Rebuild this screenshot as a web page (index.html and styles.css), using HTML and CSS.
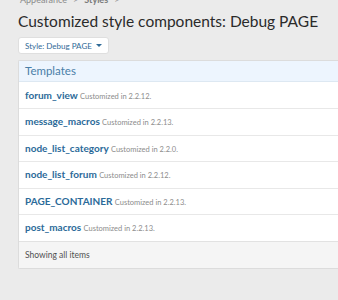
FILE: index.html
```html
<!DOCTYPE html>
<html>
<head>
<meta charset="utf-8">
<link rel="stylesheet" href="styles.css">
</head>
<body>
<div class="page">
  <div class="crumbs"><span>Appearance</span><span class="sep">&gt;</span><span class="strong">Styles</span><span class="sep">&gt;</span></div>
  <h1 class="title">Customized style components: Debug PAGE</h1>
  <div class="btnrow"><span class="btn">Style: Debug PAGE <span class="caret"></span></span></div>
  <div class="block">
    <div class="block-head">Templates</div>
    <div class="row"><a class="name">forum_view</a> <span class="hint">Customized in 2.2.12.</span></div>
    <div class="row"><a class="name">message_macros</a> <span class="hint">Customized in 2.2.13.</span></div>
    <div class="row"><a class="name">node_list_category</a> <span class="hint">Customized in 2.2.0.</span></div>
    <div class="row"><a class="name">node_list_forum</a> <span class="hint">Customized in 2.2.12.</span></div>
    <div class="row"><a class="name">PAGE_CONTAINER</a> <span class="hint">Customized in 2.2.13.</span></div>
    <div class="row"><a class="name">post_macros</a> <span class="hint">Customized in 2.2.13.</span></div>
    <div class="block-foot">Showing all items</div>
  </div>
</div>
</body>
</html>
```
FILE: styles.css
```css
html, body { margin: 0; padding: 0; background: #ebebeb; }
body { font-family: Lato, "Noto Sans", sans-serif; color: #141414; overflow: hidden; width: 338px; height: 300px; }
.page { padding: 0 0 0 18px; }
.crumbs { font-size: 9px; color: #8a8a8a; height: 10px; line-height: 10px; margin-top: -5px; display: flex; gap: 6px; padding-left: 2px; }
.crumbs .strong { font-weight: 700; color: #7a7a7a; }
.title { font-weight: 400; font-size: 15.5px; line-height: 22px; margin: 5px 0 0 0; color: #2a2a2a; white-space: nowrap; }
.btnrow { margin-top: 5px; display: flex; }
.btn { display: inline-flex; align-items: center; gap: 3px; background: #fff; border: 1px solid #dfdfdf; border-radius: 3px; height: 15px; padding: 0 6px 0 6px; font-size: 8px; color: #2f6a97; }
.caret { width: 0; height: 0; border-left: 3px solid transparent; border-right: 3px solid transparent; border-top: 3px solid #2f6a97; margin-left: 1px; }
.block { margin-top: 6px; background: #fff; border: 1px solid #dcdcdc; border-right: none; border-radius: 2px 0 0 2px; }
.block-head { background: #edf5fe; color: #4a7fa8; font-size: 11.5px; height: 20px; line-height: 20px; padding-left: 6px; border-bottom: 1px solid #dde8f2; }
.row { height: 25.5px; line-height: 25.5px; padding-left: 6px; border-top: 1px solid #e8e8e8; white-space: nowrap; font-size: 9px; }
.block-head + .row { border-top: none; height: 26px; line-height: 26px; }
.name { color: #2b6a99; font-weight: 700; font-size: 10px; }
.hint { color: #8c8c8c; font-size: 7.5px; }
.block-foot { background: #f5f5f5; border-top: 1px solid #e2e2e2; height: 26px; line-height: 26px; padding-left: 6px; font-size: 8.5px; color: #505050; }
```
